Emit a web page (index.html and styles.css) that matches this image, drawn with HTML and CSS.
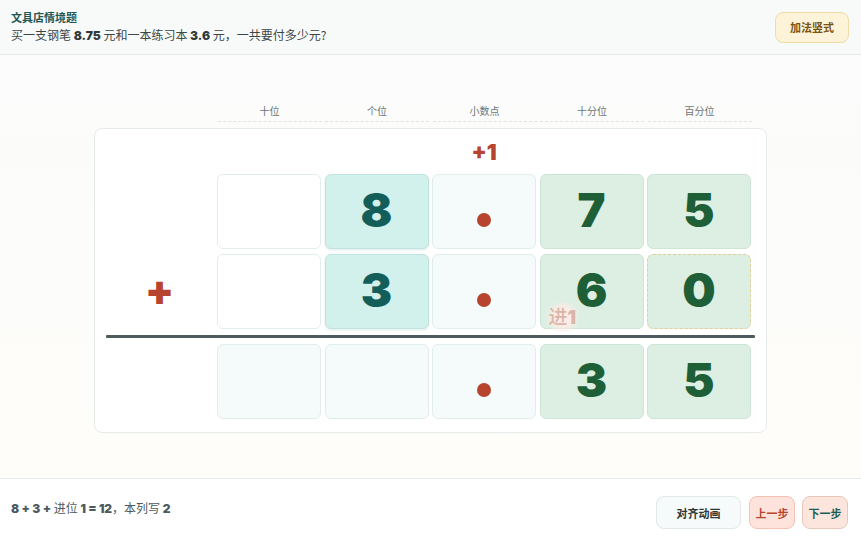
FILE: index.html
```html
<!DOCTYPE html>
<html lang="zh">
<head>
    <meta charset="UTF-8">
    <meta name="viewport" content="width=device-width, initial-scale=1.0">
    <title>加法竖式</title>
    <link rel="stylesheet" href="styles.css">
</head>
<body>
    <div class="app">
        <header class="topbar">
            <div class="question">
                <div class="q-title">文具店情境题</div>
                <div class="q-text">买一支钢笔 <b class="num">8.75</b> 元和一本练习本 <b class="num">3.6</b> 元，一共要付多少元?</div>
            </div>
            <button type="button" class="tag-btn">加法竖式</button>
        </header>

        <main class="stage">
            <div class="board">
                <div class="col-heads">
                    <span>十位</span>
                    <span>个位</span>
                    <span>小数点</span>
                    <span>十分位</span>
                    <span>百分位</span>
                </div>
                <div class="sheet">
                    <div class="grid">
                        <div class="carry-cell"></div>
                        <div class="carry-cell"></div>
                        <div class="carry-cell"></div>
                        <div class="carry-cell"><span class="carry">+1</span></div>
                        <div class="carry-cell"></div>
                        <div class="carry-cell"></div>

                        <div class="op"></div>
                        <div class="cell empty"></div>
                        <div class="cell ones">8</div>
                        <div class="cell point"><i class="dot"></i></div>
                        <div class="cell frac">7</div>
                        <div class="cell frac">5</div>

                        <div class="op">+</div>
                        <div class="cell empty"></div>
                        <div class="cell ones">3</div>
                        <div class="cell point"><i class="dot"></i></div>
                        <div class="cell frac">6<span class="carry-note">进<b>1</b></span></div>
                        <div class="cell frac pad">0</div>

                        <div class="rule"></div>

                        <div class="op"></div>
                        <div class="cell result"></div>
                        <div class="cell result"></div>
                        <div class="cell point"><i class="dot"></i></div>
                        <div class="cell frac">3</div>
                        <div class="cell frac">5</div>
                    </div>
                </div>
            </div>
        </main>

        <footer class="bottombar">
            <div class="hint"><b class="num">8 + 3 +</b> 进位 <b class="num">1 = 12</b>，本列写 <b class="num">2</b></div>
            <div class="actions">
                <button type="button" class="btn plain">对齐动画</button>
                <button type="button" class="btn prev">上一步</button>
                <button type="button" class="btn next">下一步</button>
            </div>
        </footer>
    </div>
</body>
</html>
```

FILE: styles.css
```css
* {
    box-sizing: border-box;
}

body {
    margin: 0;
    font-family: "Noto Sans CJK SC", "Noto Sans", sans-serif;
    background-color: #fdfdfb;
    color: #3d4848;
}

.app {
    display: flex;
    flex-direction: column;
    height: 540px;
}

.num {
    font-family: "Inter", "DejaVu Sans", sans-serif;
    font-weight: 900;
}

/* top bar */
.topbar {
    display: flex;
    justify-content: space-between;
    align-items: center;
    height: 55px;
    padding: 0 12px 0 11px;
    background-color: #f8fafa;
    border-bottom: 1px solid #e4e9e9;
}

.q-title {
    font-size: 11px;
    font-weight: 700;
    color: #1f5753;
    line-height: 16px;
}

.q-text {
    font-size: 12px;
    color: #3b4646;
    line-height: 18px;
    margin-top: 1px;
}

.q-text .num {
    color: #2f3a3a;
}

.tag-btn {
    height: 31px;
    padding: 0 14px;
    border: 1px solid #f1dca6;
    border-radius: 8px;
    background-color: #fdf3d8;
    color: #7a5314;
    font-family: inherit;
    font-size: 11px;
    font-weight: 700;
}

/* main stage */
.stage {
    flex: 1;
    display: flex;
    justify-content: center;
    align-items: center;
    background: linear-gradient(180deg, #fbfcfb 0%, #fefdfa 100%);
}

.board {
    width: 673px;
    margin-left: -1px;
}

.col-heads {
    display: grid;
    grid-template-columns: repeat(5, 104px);
    column-gap: 3.5px;
    margin-left: 124px;
    margin-bottom: 6px;
}

.col-heads span {
    text-align: center;
    font-size: 10px;
    color: #6b7575;
    line-height: 20px;
    border-bottom: 1px dashed #dfe4e4;
}

.sheet {
    background-color: #fff;
    border: 1px solid #e5ebea;
    border-radius: 8px;
    padding: 5px 14px 13px 11px;
}

.grid {
    display: grid;
    grid-template-columns: 108px repeat(5, 104px);
    column-gap: 3.5px;
    row-gap: 5px;
}

.carry-cell {
    height: 35px;
    display: flex;
    justify-content: center;
    align-items: center;
}

.carry {
    font-family: "Inter", "DejaVu Sans", sans-serif;
    font-weight: 900;
    font-size: 22px;
    color: #b6442f;
    padding-top: 1px;
}

.op {
    display: flex;
    justify-content: center;
    align-items: center;
    font-family: "Inter", "DejaVu Sans", sans-serif;
    font-weight: 900;
    font-size: 42px;
    color: #b6442f;
    padding-bottom: 4px;
}

.cell {
    position: relative;
    height: 75px;
    display: flex;
    justify-content: center;
    align-items: center;
    border: 1px solid #e2eeec;
    border-radius: 6px;
    font-family: "Inter", "DejaVu Sans", sans-serif;
    font-weight: 900;
    font-size: 47px;
    padding-bottom: 4px;
}

.cell.empty {
    background-color: #fff;
}

.cell.ones {
    background-color: #d2f0ec;
    border-color: #bfe3de;
    color: #145e5a;
    box-shadow: 0 1px 3px rgba(20, 94, 90, 0.12);
}

.cell.point,
.cell.result {
    background-color: #f4fbfa;
}

.cell.frac {
    background-color: #dcefe2;
    border-color: #cde5d5;
    color: #1f5f38;
}

.cell.pad {
    border: 1px dashed #e1cf95;
}

.dot {
    width: 14px;
    height: 14px;
    margin-top: 22px;
    border-radius: 50%;
    background-color: #b6442f;
}

.carry-note {
    position: absolute;
    left: 2px;
    bottom: -4px;
    padding: 2px 6px;
    border-radius: 50%;
    background: radial-gradient(circle, rgba(253, 236, 230, 0.95) 35%, rgba(253, 236, 230, 0) 72%);
    font-family: "Noto Sans CJK SC", sans-serif;
    font-size: 19px;
    font-weight: 500;
    color: #dcb4a8;
    line-height: 24px;
}

.carry-note b {
    font-family: "Inter", sans-serif;
    font-weight: 900;
}

.rule {
    grid-column: 1 / -1;
    height: 3px;
    margin: 1px -4px 1px 0;
    background-color: #4e5a5b;
    border-radius: 1px;
}

/* bottom bar */
.bottombar {
    display: flex;
    justify-content: space-between;
    align-items: center;
    height: 62px;
    padding: 0 13px 0 11px;
    background-color: #fff;
    border-top: 1px solid #e4e9e9;
}

.hint {
    font-size: 12px;
    color: #4c5a60;
    margin-top: -4px;
}

.actions {
    display: flex;
    gap: 7px;
    margin-top: 6px;
}

.btn {
    height: 33px;
    border-radius: 8px;
    font-family: inherit;
    font-size: 11px;
    font-weight: 700;
    padding: 0;
    width: 46px;
}

.btn.plain {
    width: 85px;
    margin-right: 1px;
    background-color: #f6fafa;
    border: 1px solid #e0e8e8;
    color: #2c3838;
}

.btn.prev {
    background-color: #fde3dc;
    border: 1px solid #f4c1b3;
    color: #b6442f;
}

.btn.next {
    background-color: #fbe5dd;
    border: 1px solid #e7c7ba;
    color: #1c5d57;
}
```
